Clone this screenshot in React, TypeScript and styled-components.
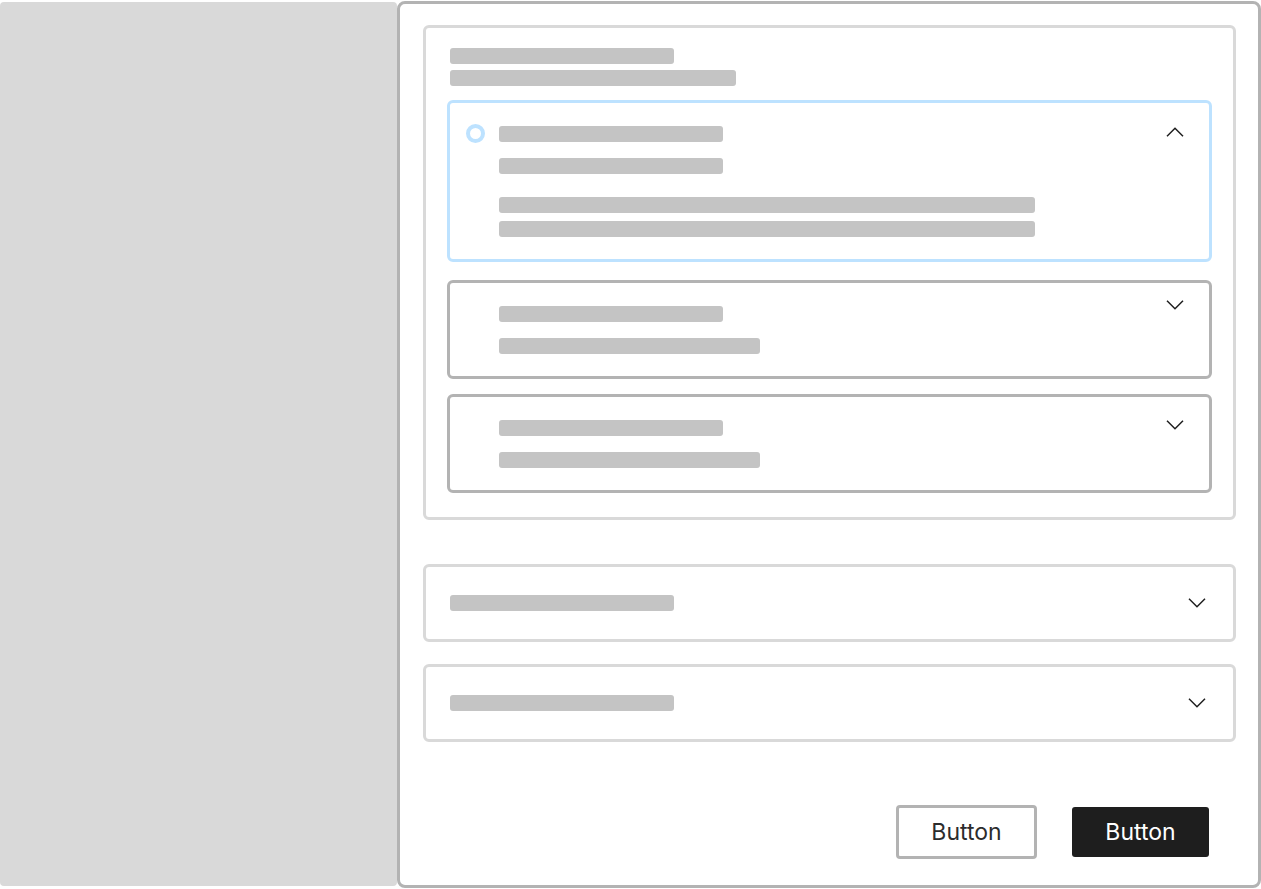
import React, { FC } from "react";
import styled, { createGlobalStyle } from "styled-components";

const GlobalStyle = createGlobalStyle`
  html, body {
    margin: 0;
    padding: 0;
    background: #fff;
  }
  body {
    font-family: Inter, "Noto Sans", "Liberation Sans", sans-serif;
    overflow: hidden;
  }
  * {
    box-sizing: border-box;
  }
`;

interface ChevronProps {
  up?: boolean;
}

const Chevron: FC<ChevronProps> = ({ up }) => (
  <svg width="18" height="10" viewBox="0 0 18 10" fill="none">
    <path
      d={up ? "M1 9.2L9 1.2L17 9.2" : "M1 0.8L9 8.8L17 0.8"}
      stroke="#1e1e1e"
      strokeWidth="1.5"
    />
  </svg>
);

interface StepData {
  active?: boolean;
  chevronTop: number;
  lines: number[][];
}

const steps: StepData[] = [
  { active: true, chevronTop: 24, lines: [[224, 224], [536, 536]] },
  { chevronTop: 17, lines: [[224, 261]] },
  { chevronTop: 23, lines: [[224, 261]] },
];

const App: FC = () => {
  return (
    <>
      <GlobalStyle />
      <Page>
        <Backdrop />
        <Sheet>
          <Card>
            <CardHead>
              <Bar $w={224} />
              <Bar $w={286} />
            </CardHead>
            <Steps>
              {steps.map((step, i) => (
                <Step key={i} $active={step.active}>
                  <RadioCol>{step.active && <Radio />}</RadioCol>
                  <StepBody>
                    {step.lines.map((group, g) => (
                      <LineGroup key={g}>
                        {group.map((w, j) => (
                          <Bar key={j} $w={w} />
                        ))}
                      </LineGroup>
                    ))}
                  </StepBody>
                  <ChevronCol $top={step.chevronTop}>
                    <Chevron up={step.active} />
                  </ChevronCol>
                </Step>
              ))}
            </Steps>
          </Card>

          <Folds>
            <Fold>
              <Bar $w={224} />
              <Chevron />
            </Fold>
            <Fold>
              <Bar $w={224} />
              <Chevron />
            </Fold>
          </Folds>

          <Footer>
            <GhostButton>Button</GhostButton>
            <SolidButton>Button</SolidButton>
          </Footer>
        </Sheet>
      </Page>
    </>
  );
};

export default App;

const Page = styled.div`
  display: flex;
  width: 1261px;
  height: 889px;
`;

const Backdrop = styled.div`
  flex-shrink: 0;
  width: 397px;
  margin: 2px 0 3px;
  border-radius: 4px;
  background: #d9d9d9;
`;

const Sheet = styled.div`
  flex: 1;
  display: flex;
  flex-direction: column;
  margin: 1px 0;
  border: 3px solid #b3b3b3;
  border-radius: 8px;
  background: #fff;
  padding: 21px 22px 0 23px;
`;

const Card = styled.div`
  border: 3px solid #d9d9d9;
  border-radius: 6px;
  padding: 20px 21px 24px;
`;

const CardHead = styled.div`
  display: flex;
  flex-direction: column;
  gap: 6px;
  padding-left: 3px;
  margin-bottom: 14px;
`;

const Bar = styled.div<{ $w: number }>`
  width: ${p => p.$w}px;
  height: 16px;
  border-radius: 3px;
  background: #c4c4c4;
`;

const Steps = styled.div`
  display: flex;
  flex-direction: column;
  gap: 15px;
`;

const Step = styled.div<{ $active?: boolean }>`
  display: grid;
  grid-template-columns: 49px 1fr auto;
  border: 3px solid ${p => (p.$active ? "#bde2ff" : "#b3b3b3")};
  border-radius: 6px;
  margin-bottom: ${p => (p.$active ? "3px" : "0")};
`;

const RadioCol = styled.div`
  padding: 21px 0 0 16px;
`;

const Radio = styled.div`
  width: 19px;
  height: 19px;
  border: 4px solid #bde2ff;
  border-radius: 50%;
`;

const StepBody = styled.div`
  display: flex;
  flex-direction: column;
  gap: 23px;
  padding: 23px 0 22px;
`;

const LineGroup = styled.div`
  display: flex;
  flex-direction: column;
  gap: 16px;

  & + & {
    gap: 8px;
  }
`;

const ChevronCol = styled.div<{ $top: number }>`
  padding: ${p => p.$top}px 25px 0 0;

  svg {
    display: block;
  }
`;

const Folds = styled.div`
  display: flex;
  flex-direction: column;
  gap: 22px;
  margin-top: 44px;
`;

const Fold = styled.div`
  display: flex;
  align-items: center;
  justify-content: space-between;
  height: 78px;
  border: 3px solid #d9d9d9;
  border-radius: 6px;
  padding: 0 27px 0 24px;

  svg {
    display: block;
  }
`;

const Footer = styled.div`
  margin-top: auto;
  display: flex;
  justify-content: flex-end;
  align-items: center;
  gap: 35px;
  padding: 0 25px 26px 0;
`;

const GhostButton = styled.button`
  width: 141px;
  height: 54px;
  border: 3px solid #b3b3b3;
  border-radius: 4px;
  background: #fff;
  color: #2c2c2c;
  font-family: Inter, "Noto Sans", "Liberation Sans", sans-serif;
  font-size: 23px;
  cursor: pointer;
`;

const SolidButton = styled.button`
  width: 137px;
  height: 50px;
  margin-right: 2px;
  border: none;
  border-radius: 3px;
  background: #1e1e1e;
  color: #fff;
  font-family: Inter, "Noto Sans", "Liberation Sans", sans-serif;
  font-size: 23px;
  cursor: pointer;
`;
